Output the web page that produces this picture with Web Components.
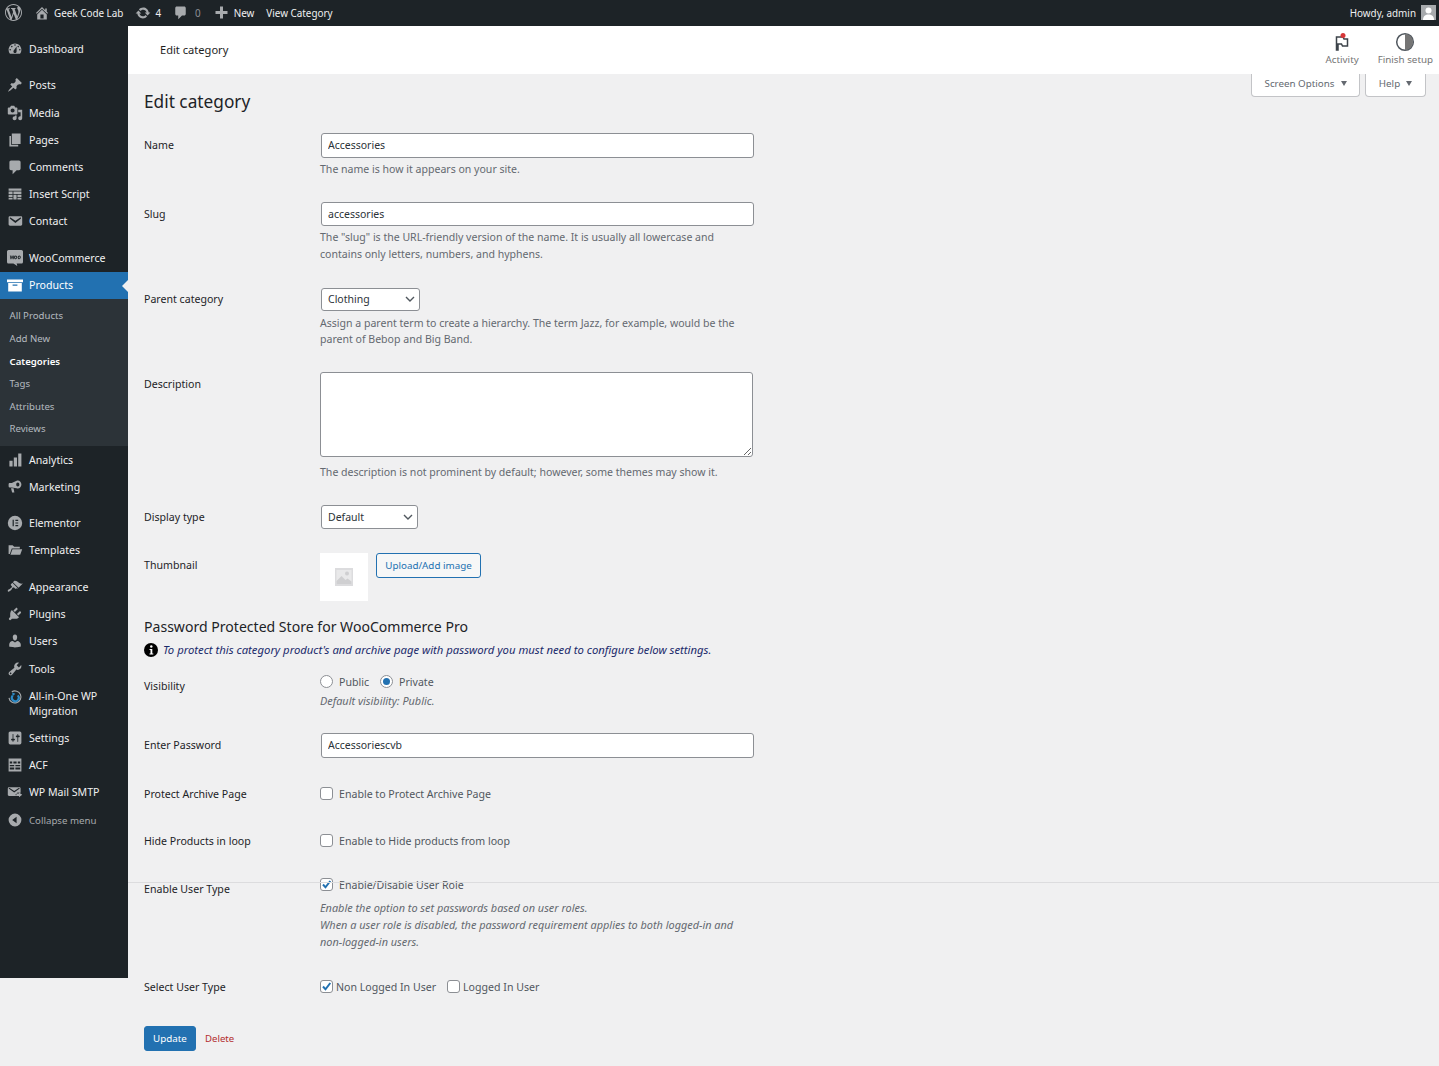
<!DOCTYPE html>
<html lang="en">
<head>
<meta charset="utf-8">
<title>Edit category</title>
<style>
  html, body { margin: 0; height: 100%; background: #f0f0f1; }
  body { font-family: "Noto Sans", "Open Sans", sans-serif; font-size: 10.6px; overflow: hidden; position: relative; }
</style>
</head>
<body>
<wp-adminbar></wp-adminbar>
<wp-shell>
  <wp-sidebar slot="side"></wp-sidebar>
  <wc-header title="Edit category"></wc-header>
  <page-title title="Edit category"></page-title>

  <form-row label="Name">
    <wp-input value="Accessories"></wp-input>
    <wp-desc style="margin-top:3px">The name is how it appears on your site.</wp-desc>
  </form-row>
  <form-row label="Slug" style="margin-top:23.5px">
    <wp-input value="accessories" h="24"></wp-input>
    <wp-desc style="margin-top:3px">The "slug" is the URL-friendly version of the name. It is usually all lowercase and<br>contains only letters, numbers, and hyphens.</wp-desc>
  </form-row>
  <form-row label="Parent category" style="margin-top:25px;--label-pad:3px">
    <wp-select value="Clothing" w="99" h="23"></wp-select>
    <wp-desc style="margin-top:4px;line-height:16.5px">Assign a parent term to create a hierarchy. The term Jazz, for example, would be the<br>parent of Bebop and Big Band.</wp-desc>
  </form-row>
  <form-row label="Description" style="margin-top:24px">
    <wp-textarea></wp-textarea>
    <wp-desc style="margin-top:7px">The description is not prominent by default; however, some themes may show it.</wp-desc>
  </form-row>
  <form-row label="Display type" style="margin-top:24px">
    <wp-select value="Default" w="97" h="24"></wp-select>
  </form-row>
  <form-row label="Thumbnail" style="margin-top:24px">
    <wp-thumb></wp-thumb>
  </form-row>

  <section-head title="Password Protected Store for WooCommerce Pro" note="To protect this category product's and archive page with password you must need to configure below settings."></section-head>

  <form-row label="Visibility" style="margin-top:15.5px">
    <wp-choices gap="6" between="11">
      <wp-check type="radio" label="Public"></wp-check>
      <wp-check type="radio" checked label="Private"></wp-check>
    </wp-choices>
    <wp-desc italic style="margin-top:2px">Default visibility: Public.</wp-desc>
  </form-row>
  <form-row label="Enter Password" style="margin-top:24px">
    <wp-input value="Accessoriescvb"></wp-input>
  </form-row>
  <form-row label="Protect Archive Page" style="margin-top:24px">
    <wp-choices gap="6" style="height:24px">
      <wp-check label="Enable to Protect Archive Page"></wp-check>
    </wp-choices>
  </form-row>
  <form-row label="Hide Products in loop" style="margin-top:23px">
    <wp-choices gap="6" style="height:24px">
      <wp-check label="Enable to Hide products from loop"></wp-check>
    </wp-choices>
  </form-row>
  <form-row label="Enable User Type" style="margin-top:24px">
    <wp-choices gap="6">
      <wp-check checked label="Enable/Disable User Role"></wp-check>
    </wp-choices>
    <wp-desc italic style="margin-top:6px">Enable the option to set passwords based on user roles.<br>When a user role is disabled, the password requirement applies to both logged-in and<br>non-logged-in users.</wp-desc>
  </form-row>
  <form-row label="Select User Type" style="margin-top:25px">
    <wp-choices gap="3" between="11" style="height:24px">
      <wp-check checked label="Non Logged In User"></wp-check>
      <wp-check label="Logged In User"></wp-check>
    </wp-choices>
  </form-row>

  <form-actions></form-actions>
</wp-shell>
<footer-line></footer-line>

<script>
// dashicons-like glyphs, 20x20 box
const ICONS = {
  wp: '<path d="M20 10c0-5.510-4.490-10-10-10C4.480 0 0 4.490 0 10c0 5.520 4.480 10 10 10 5.510 0 10-4.480 10-10zM7.780 15.370L4.370 6.220c.55-.02 1.170-.08 1.170-.08.5-.06.44-1.130-.06-1.110 0 0-1.450.11-2.370.11-.18 0-.37 0-.58-.01C4.120 2.690 6.910 1.030 10 1.030c2.300 0 4.390.87 5.970 2.300-.66-.11-1.600.38-1.600 1.530 0 .72.42 1.320.86 2.030.35.61.55 1.360.55 2.460 0 1.490-1.400 5-1.400 5l-3.030-8.350c.54-.02.82-.17.82-.17.5-.05.44-1.250-.06-1.220 0 0-1.440.12-2.380.12-.87 0-2.330-.12-2.330-.12-.5-.03-.56 1.200-.06 1.220l.92.080 1.260 3.410zM17.410 10c.24-.64.740-1.870.43-4.250.7 1.290 1.050 2.710 1.050 4.250 0 3.290-1.730 6.240-4.400 7.780.97-2.590 1.940-5.200 2.920-7.780zM6.100 18.090C3.120 16.650 1.110 13.530 1.110 10c0-1.300.23-2.480.72-3.590C3.250 10.300 4.670 14.200 6.100 18.090zm4.030-6.720l2.580 6.980c-.86.29-1.730.44-2.640.44-.76 0-1.510-.11-2.240-.33.76-2.300 1.530-4.610 2.300-7.090z"/>',
  home: '<path d="M16 8.500l1.530 1.530-1.060 1.060L10 4.620l-6.470 6.470-1.060-1.060L10 2.500l4 4v-2h2v4zm-6-2.460l6 5.990V18H4v-5.970zM12 17v-5H8v5h4z"/>',
  update: '<path d="M10.200 3.280c3.530 0 6.430 2.610 6.920 6h2.080l-3.500 4-3.500-4h2.320c-.45-1.970-2.210-3.450-4.320-3.450-1.450 0-2.730.71-3.540 1.780L4.950 5.660C6.230 4.200 8.110 3.280 10.200 3.280zm-.4 13.440c-3.520 0-6.430-2.610-6.920-6H.8l3.500-4c1.170 1.330 2.330 2.670 3.500 4H5.480c.45 1.970 2.210 3.450 4.320 3.450 1.450 0 2.730-.71 3.540-1.780l1.710 1.950c-1.280 1.460-3.150 2.380-5.250 2.380z"/>',
  comment: '<path d="M5 2h10c1.100 0 2 .9 2 2v8c0 1.100-.9 2-2 2h-3l-5 5v-5H5c-1.100 0-2-.9-2-2V4c0-1.100.9-2 2-2z"/>',
  plus: '<path d="M18 8v4h-6v6H8v-6H2V8h6V2h4v6z"/>',
  dashboard: '<path d="M3.760 16h12.480c1.100-1.370 1.760-3.110 1.760-5 0-4.420-3.580-8-8-8s-8 3.580-8 8c0 1.890.66 3.630 1.760 5zM10 4c.55 0 1 .45 1 1s-.45 1-1 1-1-.45-1-1 .45-1 1-1zM6 6c.55 0 1 .45 1 1s-.45 1-1 1-1-.45-1-1 .45-1 1-1zm8 0c.55 0 1 .45 1 1s-.45 1-1 1-1-.45-1-1 .45-1 1-1zm-5.370 5.550L12 7v6c0 1.100-.9 2-2 2s-2-.9-2-2c0-.57.24-1.080.63-1.450zM4 10c.55 0 1 .45 1 1s-.45 1-1 1-1-.45-1-1 .45-1 1-1zm12 0c.55 0 1 .45 1 1s-.45 1-1 1-1-.45-1-1 .45-1 1-1z"/>',
  post: '<path d="M10.440 3.020l1.820-1.820 6.360 6.350-1.830 1.820c-1.050-.68-2.480-.57-3.410.36l-.75.75c-.92.93-1.040 2.350-.35 3.410l-1.830 1.820-2.410-2.410-2.800 2.790c-.42.42-3.380 2.710-3.800 2.290s1.860-3.390 2.280-3.810l2.790-2.790L4.100 9.360l1.830-1.820c1.050.69 2.480.57 3.400-.36l.75-.75c.93-.92 1.050-2.350.36-3.410z"/>',
  media: '<path d="M13 11V4c0-.55-.45-1-1-1h-1.670L9 1H5L3.670 3H2c-.55 0-1 .45-1 1v7c0 .55.45 1 1 1h10c.55 0 1-.45 1-1zM7 4.500c1.380 0 2.500 1.120 2.500 2.500S8.380 9.500 7 9.500 4.500 8.380 4.500 7 5.620 4.500 7 4.500zM14 6h5v10.500c0 1.380-1.120 2.500-2.500 2.500S14 17.880 14 16.500s1.120-2.500 2.500-2.500c.17 0 .34.02.5.05V9h-3V6zm-4 8.050V13h2v3.500c0 1.380-1.120 2.500-2.500 2.500S7 17.880 7 16.500 8.120 14 9.500 14c.17 0 .34.02.5.05z"/>',
  pages: '<path d="M6 15V2h11v13H6zM5 16h9v2H3V5h2v11z"/>',
  script: '<path d="M2 3h16v3H2zM2 7h5v3H2zM8 7h10v3H8zM2 11h5v3H2zM8 11h4v6H8zM13 11h5v3h-5zM2 15h5v2H2zM13 15h5v2h-5z"/>',
  mail: '<path d="M3.870 4h13.250C18.370 4 19 4.590 19 5.790v8.420c0 1.190-.63 1.790-1.880 1.790H3.870c-1.250 0-1.880-.6-1.880-1.790V5.790c0-1.200.63-1.790 1.880-1.790zm6.620 8.600l6.740-5.530c.24-.2.43-.66.13-1.070-.29-.41-.82-.42-1.170-.17l-5.700 3.860L4.800 5.830c-.35-.25-.88-.24-1.170.17-.3.41-.11.87.13 1.070z"/>',
  woo: '<path fill-rule="evenodd" d="M2 0h16c1.100 0 2 .9 2 2v13c0 1.100-.9 2-2 2h-6l1 3-5-3H2c-1.100 0-2-.9-2-2V2C0 .9.9 0 2 0zm1.600 7l.8 4.500h1l.9-2.700.9 2.700h1L9.100 7H8l-.4 2.500L6.700 7h-.8L5 9.600 4.600 7zm7.200 0a2 2 0 0 0-1.900 2.300c0 1.300.8 2.200 1.900 2.200s1.900-.9 1.900-2.300c0-1.300-.8-2.200-1.900-2.200zm0 1c.5 0 .8.5.8 1.200 0 .8-.3 1.300-.8 1.300s-.8-.5-.8-1.300c0-.7.3-1.200.8-1.200zm4.500-1a2 2 0 0 0-1.900 2.300c0 1.300.8 2.200 1.900 2.200s1.900-.9 1.900-2.300c0-1.300-.8-2.200-1.900-2.200zm0 1c.5 0 .8.5.8 1.200 0 .8-.3 1.300-.8 1.300s-.8-.5-.8-1.300c0-.7.3-1.200.8-1.200z"/>',
  products: '<path fill-rule="evenodd" d="M0 3h20v3.500H0zM1.500 7.500h17V18h-17zm5.500 2v1.500h6V9.500z"/>',
  analytics: '<path d="M3 11h4v7H3zM8.500 7h4v11h-4zM14 2h4v16h-4z"/>',
  marketing: '<path fill-rule="evenodd" d="M13.500 2c2.500 0 4.500 2.200 4.500 5s-2 5-4.500 5c-.5 0-1-.1-1.500-.3L6 10.500H3.500A1.500 1.500 0 0 1 2 9V6.500C2 5.700 2.700 5 3.500 5H6l6-2.700c.5-.2 1-.3 1.500-.3zm0 2.500c-1.200 0-2 1.100-2 2.500s.8 2.500 2 2.500 2-1.100 2-2.500-.8-2.500-2-2.500zM5 11.500h3.200l1 5.500H6.400z"/>',
  elementor: '<path fill-rule="evenodd" d="M10 1a9 9 0 1 0 0 18 9 9 0 0 0 0-18zM7 6h1.500v8H7zm3.500 0H14v1.500h-3.500zm0 3.250H14v1.500h-3.500zm0 3.250H14V14h-3.500z"/>',
  templates: '<path d="M2 4h5l2 2h7v2H6L3.500 15H2zM6.800 9H19l-2.500 7H4.300z"/>',
  appearance: '<path d="M14.480 11.060L7.410 3.990l1.500-1.500c.5-.56 2.300-.47 3.510.32 1.210.8 1.430 1.280 2.910 2.100 1.180.64 2.450 1.260 4.450.85zm-.71.71L6.700 4.700 4.930 6.470c-.39.39-.39 1.020 0 1.410l1.060 1.060c.39.39.39 1.030 0 1.420-.6.6-1.430 1.110-2.210 1.690-.35.26-.7.53-1.010.84C1.430 13.230.4 14.840 1.160 15.600c.76.76 2.370-.27 3.710-1.610.31-.31.58-.66.84-1.010.58-.78 1.090-1.610 1.690-2.210.39-.39 1.030-.39 1.420 0l1.060 1.060c.39.39 1.020.39 1.410 0z"/>',
  plugins: '<path d="M13.110 4.360L9.870 7.600 8 5.730l3.240-3.240c.35-.34 1.050-.2 1.560.32.52.51.66 1.210.31 1.550zm-8 1.770l.91-1.120 9.010 9.010-1.190.84c-.71.71-2.630 1.160-3.820 1.160H6.140L4.900 17.260c-.59.59-1.540.59-2.120 0-.59-.58-.59-1.530 0-2.120l1.240-1.240v-3.880c0-1.130.4-3.190 1.090-3.890zm7.260 3.970l3.240-3.240c.34-.35 1.040-.21 1.550.31.52.51.66 1.210.31 1.550l-3.240 3.250z"/>',
  users: '<path d="M10 9.250c-2.270 0-2.730-3.440-2.730-3.440C7 4.020 7.820 2 9.970 2c2.160 0 2.980 2.020 2.710 3.810 0 0-.41 3.440-2.680 3.440zm0 2.570L12.720 10c2.390 0 4.520 2.330 4.520 4.530v2.490s-3.650 1.130-7.240 1.130c-3.650 0-7.240-1.130-7.240-1.130v-2.490c0-2.250 1.940-4.480 4.470-4.480z"/>',
  tools: '<path d="M16.680 9.770c-1.340 1.340-3.300 1.670-4.950.99l-5.410 6.520c-.99.99-2.590.99-3.580 0s-.99-2.590 0-3.570l6.520-5.420c-.68-1.650-.35-3.610.99-4.950 1.280-1.280 3.120-1.620 4.720-1.060l-2.890 2.890 2.820 2.820 2.860-2.870c.53 1.580.18 3.390-1.080 4.650zM3.810 16.210c.4.39 1.040.39 1.430 0 .4-.4.4-1.040 0-1.430-.39-.4-1.030-.4-1.430 0-.39.39-.39 1.030 0 1.430z"/>',
  migrate: '<path fill="none" stroke="#a7aaad" stroke-width="1.400" d="M6 3.500a7.500 7.500 0 1 1-3.500 7.500"/><path fill="none" stroke="#2c8cc9" stroke-width="2.600" d="M13.500 8a4.300 4.300 0 1 1-6.500.3"/><path fill="#2c8cc9" d="M6.500 4.500l4 1.500-3.500 3z"/>',
  settings: '<path d="M18 16V4c0-1.100-.9-2-2-2H4c-1.100 0-2 .9-2 2v12c0 1.100.9 2 2 2h12c1.100 0 2-.9 2-2zM8 11h1c.55 0 1 .45 1 1s-.45 1-1 1H8v1.500c0 .28-.22.5-.5.5s-.5-.22-.5-.5V13H6c-.55 0-1-.45-1-1s.45-1 1-1h1V5.500c0-.28.22-.5.5-.5s.5.22.5.5V11zm5-2h-1c-.55 0-1-.45-1-1s.45-1 1-1h1V5.500c0-.28.22-.5.5-.5s.5.22.5.5V7h1c.55 0 1 .45 1 1s-.45 1-1 1h-1v5.500c0 .28-.22.5-.5.5s-.5-.22-.5-.5V9z"/>',
  acf: '<path fill-rule="evenodd" d="M2 2h16v16H2zm1.500 3.500v2.500h3V5.500zm4.500 0v2.500h4V5.500zm5.500 0v2.500h3V5.500zM3.500 10v1.700h5.500V10zm7 0v1.700h6V10zm-7 3v2.500h5.500V13zm7 0v2.500h6V13z"/>',
  smtp: '<path fill-rule="evenodd" d="M2.500 4h13c.8 0 1.500.7 1.500 1.500V11h-3v-1l-3.500 3.500L12 15H2.500c-.8 0-1.500-.7-1.500-1.500v-8C1 4.700 1.700 4 2.500 4zm6.500 6.500L15.500 6c.3-.2.4-.6.1-.9-.2-.3-.6-.3-.9-.1L9 8.900 3.300 5c-.3-.2-.7-.2-.9.1-.3.3-.2.7.1.9z"/><path d="M15 12v-1.500l4 3-4 3V15h-4l1-1.500-1-1.500z"/>',
  collapse: '<path fill-rule="evenodd" d="M10 2a8 8 0 1 0 0 16 8 8 0 0 0 0-16zm2 4v8L6.500 10z"/>'
};

function icon(name, size, fill) {
  return `<svg width="${size}" height="${size}" viewBox="0 0 20 20" fill="${fill}" aria-hidden="true">${ICONS[name]}</svg>`;
}

class WpAdminbar extends HTMLElement {
  connectedCallback() {
    const root = this.attachShadow({ mode: "open" });
    root.innerHTML = `
      <style>
        :host { display: flex; align-items: center; height: 26px; padding-bottom: 1px; box-sizing: border-box; background: #1d2327; color: #f0f0f1; font-size: 9.900px; }
        .item { display: flex; align-items: center; }
        svg { display: block; flex: none; }
        .muted { color: #8c8f94; }
        .right { margin-left: auto; margin-right: 3px; display: flex; align-items: center; gap: 5px; }
        .avatar { width: 15px; height: 15px; background: #a7aaad; display: block; }
      </style>
      <span class="item" style="margin-left:5px">${icon("wp", 17, "#a7aaad")}</span>
      <span class="item" style="margin-left:12px;gap:4px">${icon("home", 16, "#a7aaad")}Geek Code Lab</span>
      <span class="item" style="margin-left:12px;gap:4px">${icon("update", 16, "#a7aaad")}4</span>
      <span class="item" style="margin-left:12px;gap:7px">${icon("comment", 15, "#a7aaad")}<span class="muted">0</span></span>
      <span class="item" style="margin-left:13px;gap:5px">${icon("plus", 15, "#a7aaad")}New</span>
      <span class="item" style="margin-left:12px">View Category</span>
      <span class="right">Howdy, admin
        <svg class="avatar" viewBox="0 0 15 15"><rect width="15" height="15" fill="#a7aaad"/><circle cx="7.500" cy="5.500" r="3" fill="#fff"/><path d="M2 15c0-4 2.500-5.500 5.500-5.500S13 11 13 15z" fill="#fff"/></svg>
      </span>`;
  }
}
customElements.define("wp-adminbar", WpAdminbar);

class WpShell extends HTMLElement {
  connectedCallback() {
    const root = this.attachShadow({ mode: "open" });
    root.innerHTML = `
      <style>
        :host { display: flex; align-items: flex-start; }
        .main { flex: 1; min-width: 0; }
      </style>
      <slot name="side"></slot>
      <div class="main"><slot></slot></div>`;
  }
}
customElements.define("wp-shell", WpShell);

const MENU = [
  { t: "Dashboard", i: "dashboard", sep: true },
  { t: "Posts", i: "post" },
  { t: "Media", i: "media" },
  { t: "Pages", i: "pages" },
  { t: "Comments", i: "comment" },
  { t: "Insert Script", i: "script" },
  { t: "Contact", i: "mail", sep: true },
  { t: "WooCommerce", i: "woo" },
  { t: "Products", i: "products", active: true, sub: ["All Products", "Add New", "Categories", "Tags", "Attributes", "Reviews"] },
  { t: "Analytics", i: "analytics" },
  { t: "Marketing", i: "marketing", sep: true, tight: true },
  { t: "Elementor", i: "elementor" },
  { t: "Templates", i: "templates", sep: true },
  { t: "Appearance", i: "appearance" },
  { t: "Plugins", i: "plugins" },
  { t: "Users", i: "users" },
  { t: "Tools", i: "tools" },
  { t: "All-in-One WP<br>Migration", i: "migrate", two: true },
  { t: "Settings", i: "settings" },
  { t: "ACF", i: "acf" },
  { t: "WP Mail SMTP", i: "smtp" }
];

class WpSidebar extends HTMLElement {
  connectedCallback() {
    const root = this.attachShadow({ mode: "open" });
    const items = MENU.map(m => {
      let html = `<a class="item${m.active ? " active" : ""}${m.two ? " two" : ""}${m.sep ? " sep" : ""}${m.tight ? " tight" : ""}">
        <span class="ic">${icon(m.i, 16, m.active ? "#fff" : "#a7aaad")}</span><span class="tx">${m.t}</span></a>`;
      if (m.sub) {
        html += `<div class="sub">` + m.sub.map(s => `<a class="${s === "Categories" ? "cur" : ""}">${s}</a>`).join("") + `</div>`;
      }
      return html;
    }).join("");
    root.innerHTML = `
      <style>
        :host { display: block; flex: none; width: 128px; height: 952px; background: #1d2327; padding-top: 9.6px; box-sizing: border-box; color: #f0f0f1; font-size: 10.600px; }
        .item { display: flex; align-items: center; height: 27.2px; position: relative; box-sizing: border-box; padding-bottom: 1px; }
        .item.sep { margin-bottom: 9.6px; }
        .item.tight { margin-bottom: 9.1px; }
        .item.two { height: 42.2px; align-items: flex-start; padding-top: 6px; line-height: 15px; }
        .ic { width: 29px; padding-left: 7px; box-sizing: border-box; flex: none; }
        .ic svg { display: block; }
        .active { background: #2271b1; color: #fff; }
        .active::after { content: ""; position: absolute; right: 0; top: 8px; border: 6px solid transparent; border-right-color: #f0f0f1; border-left-width: 0; }
        .sub { background: #2c3338; padding: 6px 0 5px; margin-bottom: .5px; font-size: 9.650px; color: rgba(240,246,252,.7); }
        .sub a { display: block; height: 22.6px; line-height: 22.6px; padding-left: 9.5px; }
        .sub a.cur { color: #fff; font-weight: 600; }
        .collapse { display: flex; align-items: center; height: 27.2px; color: #a7aaad; font-size: 9.700px; }
      </style>
      ${items}
      <a class="collapse"><span class="ic">${icon("collapse", 16, "#a7aaad")}</span>Collapse menu</a>`;
  }
}
customElements.define("wp-sidebar", WpSidebar);

class WcHeader extends HTMLElement {
  connectedCallback() {
    const root = this.attachShadow({ mode: "open" });
    root.innerHTML = `
      <style>
        :host { display: flex; align-items: center; height: 48px; background: #fff; padding-left: 32px; color: #1e1e1e; font-size: 11.100px; }
        .title { padding-bottom: 2px; }
        .right { margin-left: auto; display: flex; margin-right: 6px; gap: 19px; padding-bottom: 2px; }
        .act { display: flex; flex-direction: column; align-items: center; gap: 1px; color: #757575; font-size: 9.800px; line-height: 14px; }
        svg { display: block; }
      </style>
      <span class="title">${this.getAttribute("title")}</span>
      <div class="right">
        <span class="act">
          <svg width="20" height="20" viewBox="0 0 20 20"><path d="M4.500 18V5h6.500l1 2h3.500v7h-5l-1-2H6v6z" fill="none" stroke="#3c434a" stroke-width="1.500"/><circle cx="11" cy="3.500" r="2.500" fill="#d63638"/></svg>
          Activity
        </span>
        <span class="act">
          <svg width="20" height="20" viewBox="0 0 20 20"><circle cx="10" cy="10" r="8.300" fill="#fff" stroke="#50575e" stroke-width="1.500"/><path d="M10 2a8 8 0 0 1 0 16z" fill="#757575"/></svg>
          Finish setup
        </span>
      </div>`;
    this.removeAttribute("title");
  }
}
customElements.define("wc-header", WcHeader);

class PageTitle extends HTMLElement {
  connectedCallback() {
    const root = this.attachShadow({ mode: "open" });
    root.innerHTML = `
      <style>
        :host { display: flex; justify-content: space-between; align-items: flex-start; height: 59px; padding: 0 13px 0 16px; }
        h1 { margin: 16px 0 0; font-size: 17.250px; font-weight: 400; line-height: 24px; color: #1d2327; }
        .tabs { display: flex; gap: 5px; }
        .tab { height: 23px; box-sizing: border-box; padding-bottom: 3px; background: #fff; border: 1px solid #c3c4c7; border-top: 0; border-radius: 0 0 4px 4px; display: flex; align-items: center; justify-content: center; color: #646970; font-size: 9.800px; gap: 6px; }
        .tab i { border: 3.500px solid transparent; border-top: 5px solid #646970; border-bottom: 0; width: 0; height: 0; }
      </style>
      <h1>${this.getAttribute("title")}</h1>
      <div class="tabs">
        <span class="tab" style="width:109px">Screen Options <i></i></span>
        <span class="tab" style="width:61px">Help <i></i></span>
      </div>`;
    this.removeAttribute("title");
  }
}
customElements.define("page-title", PageTitle);

class FormRow extends HTMLElement {
  connectedCallback() {
    const root = this.attachShadow({ mode: "open" });
    root.innerHTML = `
      <style>
        :host { display: grid; grid-template-columns: 176px 434px; padding-left: 16px; }
        label { padding-top: var(--label-pad, 4px); line-height: 17px; color: #1d2327; font-size: 10.600px; }
      </style>
      <label>${this.getAttribute("label")}</label>
      <div><slot></slot></div>`;
  }
}
customElements.define("form-row", FormRow);

class WpInput extends HTMLElement {
  connectedCallback() {
    const root = this.attachShadow({ mode: "open" });
    const h = this.getAttribute("h") || 25;
    root.innerHTML = `
      <style>
        :host { display: block; padding-left: 1px; }
        input { display: block; width: 433px; height: ${h}px; box-sizing: border-box; border: 1px solid #8c8f94; border-radius: 3px; padding: 0 6px ${h == 25 ? 1 : 0}px; background: #fff; color: #2c3338; font: 10.500px "Noto Sans", sans-serif; outline: 0; }
      </style>
      <input type="text" value="${this.getAttribute("value")}">`;
  }
}
customElements.define("wp-input", WpInput);

class WpSelect extends HTMLElement {
  connectedCallback() {
    const root = this.attachShadow({ mode: "open" });
    const v = this.getAttribute("value");
    root.innerHTML = `
      <style>
        :host { display: block; position: relative; margin-left: 1px; width: ${this.getAttribute("w")}px; }
        select { appearance: none; display: block; width: 100%; height: ${this.getAttribute("h")}px; box-sizing: border-box; border: 1px solid #8c8f94; border-radius: 3px; padding: 0 6px; background: #fff; color: #2c3338; font: 10.500px "Noto Sans", sans-serif; outline: 0; }
        svg { position: absolute; right: 5px; top: 50%; margin-top: -5px; pointer-events: none; }
      </style>
      <select><option>${v}</option></select>
      <svg width="10" height="10" viewBox="0 0 10 10"><path d="M1 3l4 4 4-4" fill="none" stroke="#50575e" stroke-width="1.400"/></svg>`;
  }
}
customElements.define("wp-select", WpSelect);

class WpTextarea extends HTMLElement {
  connectedCallback() {
    const root = this.attachShadow({ mode: "open" });
    root.innerHTML = `
      <style>
        :host { display: block; }
        textarea { display: block; width: 433px; height: 85px; box-sizing: border-box; border: 1px solid #8c8f94; border-radius: 3px; background: #fff; margin: 0; outline: 0; }
      </style>
      <textarea></textarea>`;
  }
}
customElements.define("wp-textarea", WpTextarea);

class WpDesc extends HTMLElement {
  connectedCallback() {
    const root = this.attachShadow({ mode: "open" });
    root.innerHTML = `
      <style>
        :host { display: block; line-height: 17px; color: #646970; font-size: 10.550px; white-space: nowrap; }
        :host([italic]) { font-style: italic; font-size: 10.900px; }
      </style>
      <slot></slot>`;
  }
}
customElements.define("wp-desc", WpDesc);

class WpThumb extends HTMLElement {
  connectedCallback() {
    const root = this.attachShadow({ mode: "open" });
    root.innerHTML = `
      <style>
        :host { display: flex; gap: 8px; align-items: flex-start; }
        .img { width: 48px; height: 48px; background: #fff; display: flex; align-items: center; justify-content: center; }
        button { height: 25px; width: 105px; box-sizing: border-box; padding: 0; border: 1px solid #2271b1; border-radius: 3px; background: #f6f7f7; color: #2271b1; font: 9.800px "Noto Sans", sans-serif; }
      </style>
      <div class="img">
        <svg width="18" height="18" viewBox="0 0 18 18"><rect width="18" height="18" fill="#dcdcde"/><rect x="1.500" y="2" width="15" height="14" fill="#e9e9ea"/><circle cx="12" cy="5.500" r="2" fill="#cfcfd1"/><path d="M1.500 13l5-5 4 4 2-1.500 4 3V16h-15z" fill="#cfcfd1"/></svg>
      </div>
      <button>Upload/Add image</button>`;
  }
}
customElements.define("wp-thumb", WpThumb);

class SectionHead extends HTMLElement {
  connectedCallback() {
    const root = this.attachShadow({ mode: "open" });
    root.innerHTML = `
      <style>
        :host { display: block; padding: 15px 0 0 16px; }
        h2 { margin: 0; font-size: 14.070px; font-weight: 400; line-height: 22px; color: #1d2327; }
        p { margin: 3.500px 0 0; display: flex; align-items: center; gap: 5px; line-height: 17px; height: 17px; font-style: italic; color: #1b2a6b; font-size: 11.300px; white-space: nowrap; }
        svg { display: block; flex: none; }
      </style>
      <h2>${this.getAttribute("title")}</h2>
      <p>
        <svg width="14" height="14" viewBox="0 0 14 14"><circle cx="7" cy="7" r="7" fill="#000"/><circle cx="7.300" cy="3.500" r="1.200" fill="#fff"/><path d="M5.500 6h2.800v4.500h1V11.500H5.500v-1h1V7h-1z" fill="#fff"/></svg>
        ${this.getAttribute("note")}
      </p>`;
    this.removeAttribute("title");
  }
}
customElements.define("section-head", SectionHead);

class WpChoices extends HTMLElement {
  connectedCallback() {
    const root = this.attachShadow({ mode: "open" });
    root.innerHTML = `
      <style>
        :host { display: flex; align-items: center; height: 16px; gap: ${this.getAttribute("between") || 0}px; --gap: ${this.getAttribute("gap") || 6}px; }
      </style>
      <slot></slot>`;
  }
}
customElements.define("wp-choices", WpChoices);

class WpCheck extends HTMLElement {
  connectedCallback() {
    const root = this.attachShadow({ mode: "open" });
    const radio = this.getAttribute("type") === "radio";
    const on = this.hasAttribute("checked");
    let mark = "";
    if (on && radio) mark = `<i class="dot"></i>`;
    if (on && !radio) mark = `<svg width="11" height="11" viewBox="0 0 11 11"><path d="M2 5.500l2.500 2.800L9.300 2" fill="none" stroke="#2271b1" stroke-width="2"/></svg>`;
    root.innerHTML = `
      <style>
        :host { display: inline-flex; align-items: center; gap: var(--gap, 6px); color: #50575e; font-size: 10.600px; line-height: 16px; }
        .box { width: 13px; height: 13px; box-sizing: border-box; border: 1px solid #8c8f94; background: #fff; border-radius: ${radio ? "50%" : "3px"}; display: flex; align-items: center; justify-content: center; flex: none; }
        .dot { width: 7px; height: 7px; border-radius: 50%; background: #2271b1; }
      </style>
      <span class="box">${mark}</span><span>${this.getAttribute("label")}</span>`;
  }
}
customElements.define("wp-check", WpCheck);

class FormActions extends HTMLElement {
  connectedCallback() {
    const root = this.attachShadow({ mode: "open" });
    root.innerHTML = `
      <style>
        :host { display: flex; align-items: center; gap: 9px; margin-top: 27px; padding-left: 16px; }
        button { width: 52px; height: 25px; padding: 0; border: 1px solid #2271b1; border-radius: 3px; background: #2271b1; color: #fff; font: 9.800px "Noto Sans", sans-serif; }
        a { color: #b32d2e; font-size: 9.600px; }
      </style>
      <button>Update</button><a>Delete</a>`;
  }
}
customElements.define("form-actions", FormActions);

// the stray footer rule that runs across the form in the original
class FooterLine extends HTMLElement {
  connectedCallback() {
    const root = this.attachShadow({ mode: "open" });
    root.innerHTML = `<style>:host { position: absolute; top: 882px; left: 128px; right: 0; height: 1px; background: #dcdcde; }</style>`;
  }
}
customElements.define("footer-line", FooterLine);
</script>
</body>
</html>
